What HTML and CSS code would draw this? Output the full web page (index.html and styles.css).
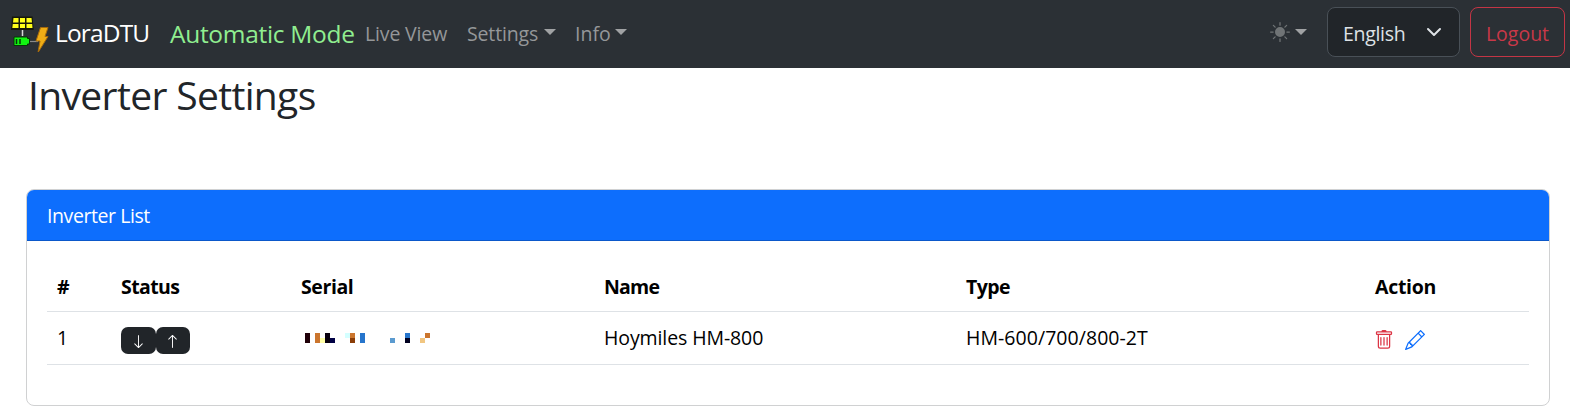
FILE: index.html
```html
<!DOCTYPE html>
<html lang="en">
<head>
<meta charset="utf-8">
<title>LoraDTU</title>
<link rel="stylesheet" href="styles.css">
</head>
<body>
<nav class="navbar">
  <svg class="logo" viewBox="0 0 40 40">
    <path d="M2 4.500h20.500l1.200 13.500H1z" fill="#16180a"/>
    <path d="M3.500 6h5v4.500H3zM10 6h5v4.500h-5zM16.500 6h5l.5 4.500h-5.500zM2.800 12h5.700v4H2.300zM10 12h5v4h-5zM16.500 12h5.700l.3 4h-6z" fill="#ffff1a"/>
    <path d="M12.500 18v6" stroke="#d8d8d8" stroke-width="1.500"/>
    <path d="M20 29.500h8" stroke="#8a8a8a" stroke-width="1.200"/>
    <path d="M4 25h13.500v1.500h2v5.500h-2v1.500H4z" fill="#12f312" stroke="#073507"/>
    <path d="M6.500 27v5M10 27v5" stroke="#063806" stroke-width="1.500"/>
    <path d="M30.500 15.500h7.500l-3 9h3L28 40.500l2-11.500H26z" fill="#efad16" stroke="#a66a0c"/>
  </svg>
  <span class="brand">LoraDTU</span>
  <span class="mode">Automatic Mode</span>
  <a class="link live">Live View</a>
  <a class="link settings">Settings</a><i class="caret"></i>
  <a class="link info">Info</a><i class="caret"></i>
  <div class="tools">
    <svg class="sun" viewBox="0 0 16 16"><path d="M8 12a4 4 0 1 0 0-8 4 4 0 0 0 0 8M8 0a.5.5 0 0 1 .5.5v2a.5.5 0 0 1-1 0v-2A.5.5 0 0 1 8 0m0 13a.5.5 0 0 1 .5.5v2a.5.5 0 0 1-1 0v-2A.5.5 0 0 1 8 13m8-5a.5.5 0 0 1-.5.5h-2a.5.5 0 0 1 0-1h2a.5.5 0 0 1 .5.5M3 8a.5.5 0 0 1-.5.5h-2a.5.5 0 0 1 0-1h2A.5.5 0 0 1 3 8m10.657-5.657a.5.5 0 0 1 0 .707l-1.414 1.415a.5.5 0 1 1-.707-.708l1.414-1.414a.5.5 0 0 1 .707 0m-9.193 9.193a.5.5 0 0 1 0 .707L3.050 13.657a.5.5 0 0 1-.707-.707l1.414-1.414a.5.5 0 0 1 .707 0m9.193 2.121a.5.5 0 0 1-.707 0l-1.414-1.414a.5.5 0 0 1 .707-.707l1.414 1.414a.5.5 0 0 1 0 .707M4.464 4.465a.5.5 0 0 1-.707 0L2.343 3.050a.5.5 0 1 1 .707-.707l1.414 1.414a.5.5 0 0 1 0 .708"/></svg>
    <i class="caret theme-caret"></i>
    <div class="select"><span>English</span><svg class="chevron" viewBox="0 0 16 16"><path d="m2 5 6 6 6-6"/></svg></div>
    <button class="logout">Logout</button>
  </div>
</nav>
<main class="page">
  <h1 class="title"><span>Inverter Settings</span></h1>
  <section class="card">
    <header class="card-header"><span>Inverter List</span></header>
    <div class="table">
      <div class="row head">
        <b class="c-num">#</b><b class="c-status">Status</b><b class="c-serial">Serial</b><b class="c-name">Name</b><b class="c-type">Type</b><b class="c-action">Action</b>
      </div>
      <div class="row">
        <span>1</span>
        <span class="badges">
          <span class="badge"><svg viewBox="0 0 16 16"><path fill-rule="evenodd" d="M8 1a.5.5 0 0 1 .5.5v11.793l3.146-3.147a.5.5 0 0 1 .708.708l-4 4a.5.5 0 0 1-.708 0l-4-4a.5.5 0 0 1 .708-.708L7.500 13.293V1.500A.5.5 0 0 1 8 1"/></svg></span><span class="badge"><svg viewBox="0 0 16 16"><path fill-rule="evenodd" d="M8 15a.5.5 0 0 0 .5-.5V2.707l3.146 3.147a.5.5 0 0 0 .708-.708l-4-4a.5.5 0 0 0-.708 0l-4 4a.5.5 0 1 0 .708.708L7.500 2.707V14.500a.5.5 0 0 0 .5.5"/></svg></span>
        </span>
        <svg class="serial" viewBox="0 0 26 2" shape-rendering="crispEdges">
          <path fill="#200008" d="M0 0h1v2H0z"/><path fill="#cb752d" d="M2 0h1v2H2zM9 0h1v1H9zM24 0h1v1h-1z"/><path fill="#ffffa6" d="M3 1h1v1H3z"/><path fill="#08000e" d="M4 0h1v2H4z"/><path fill="#000044" d="M5 1h1v1H5z"/><path fill="#d4ffff" d="M8 0h1v1H8z"/><path fill="#8b3d08" d="M9 1h1v1H9z"/><path fill="#2675cc" d="M11 0h1v2h-1zM20 0h1v1h-1z"/><path fill="#5b9bd0" d="M17 1h1v1h-1z"/><path fill="#000020" d="M20 1h1v1h-1z"/><path fill="#f1c681" d="M23 1h1v1h-1z"/>
        </svg>
        <span class="v-name">Hoymiles HM-800</span>
        <span class="v-type">HM-600/700/800-2T</span>
        <span class="actions">
          <svg class="trash" viewBox="0 0 16 16"><path d="M5.500 5.500A.5.5 0 0 1 6 6v6a.5.5 0 0 1-1 0V6a.5.5 0 0 1 .5-.5m2.500 0a.5.5 0 0 1 .5.5v6a.5.5 0 0 1-1 0V6a.5.5 0 0 1 .5-.5m3 .5a.5.5 0 0 0-1 0v6a.5.5 0 0 0 1 0z"/><path d="M14.500 3a1 1 0 0 1-1 1H13v9a2 2 0 0 1-2 2H5a2 2 0 0 1-2-2V4h-.5a1 1 0 0 1-1-1V2a1 1 0 0 1 1-1H6a1 1 0 0 1 1-1h2a1 1 0 0 1 1 1h3.500a1 1 0 0 1 1 1zM4.118 4 4 4.059V13a1 1 0 0 0 1 1h6a1 1 0 0 0 1-1V4.059L11.882 4zM2.500 3h11V2h-11z"/></svg>
          <svg class="pencil" viewBox="0 0 16 16"><path d="M12.146.146a.5.5 0 0 1 .708 0l3 3a.5.5 0 0 1 0 .708l-10 10a.5.5 0 0 1-.168.110l-5 2a.5.5 0 0 1-.650-.650l2-5a.5.5 0 0 1 .110-.168zM11.207 2.500 13.500 4.793 14.793 3.500 12.500 1.207zm1.586 3L10.500 3.207 4 9.707V10h.5a.5.5 0 0 1 .5.5v.5h.5a.5.5 0 0 1 .5.5v.5h.293zm-9.761 5.175-.106.106-1.528 3.821 3.821-1.528.106-.106A.5.5 0 0 1 5 12.500V12h-.5a.5.5 0 0 1-.5-.5V11h-.5a.5.5 0 0 1-.468-.325"/></svg>
        </span>
      </div>
    </div>
  </section>
</main>
</body>
</html>
```
FILE: styles.css
```css
* { box-sizing: border-box; }
body {
  margin: 0;
  background: #fff;
  color: #000;
  font: 19.5px/30px "Open Sans", "Noto Sans", sans-serif;
  overflow: hidden;
}
svg { display: block; flex: none; }
.navbar {
  display: flex;
  align-items: center;
  height: 68px;
  padding: 0 5px 4px 10px;
  background: #2b3035;
  white-space: nowrap;
}
.logo { width: 40px; height: 40px; margin-top: -1px; }
.brand { width: 119px; padding: 2px 0 0 5px; color: #fff; font-size: 24.5px; letter-spacing: -.85px; }
.mode { width: 196px; padding: 3px 0 0 1px; color: #90ee90; font-size: 24.5px; letter-spacing: -.3px; }
.link { margin-top: 3px; color: #959799; letter-spacing: -.15px; }
.live { width: 102px; }
.settings { width: 77px; }
.info { width: 40px; margin-left: 19px; letter-spacing: 0; }
.caret {
  border: 6px solid transparent;
  border-top-color: #a0a2a4;
  border-bottom: 0;
}
.tools { display: flex; align-items: center; margin-left: auto; }
.sun { width: 20px; height: 20px; fill: #707476; }
.theme-caret { margin: 0 20px 0 5px; }
.select {
  display: flex;
  align-items: center;
  justify-content: space-between;
  width: 133px;
  height: 50px;
  margin-right: 10px;
  padding: 4px 17px 0 15px;
  border: 1px solid #495057;
  border-radius: 8px;
  background: #212529;
  color: #dee2e6;
  letter-spacing: -.3px;
}
.chevron { width: 16px; height: 16px; margin-top: -5px; fill: none; stroke: #dee2e6; stroke-width: 2; stroke-linecap: round; stroke-linejoin: round; }
.logout {
  width: 95px;
  height: 50px;
  padding: 4px 0 0;
  border: 1px solid #c43545;
  border-radius: 8px;
  background: none;
  color: #c93848;
  font: inherit;
  letter-spacing: 0;
}
.page { padding: 0 20px 0 26px; }
.title {
  height: 121px;
  margin: 0;
  padding: 3px 0 0 2px;
  color: #212529;
  font-size: 39px;
  font-weight: 400;
  line-height: 48px;
  letter-spacing: -.65px;
}
.card { height: 217px; border: 1px solid #d0d1d2; border-radius: 8px; }
.card-header {
  height: 51px;
  padding: 11px 20px;
  border-bottom: 1px solid #0b58ca;
  border-radius: 7px 7px 0 0;
  background: #0d6efd;
  color: #fff;
  letter-spacing: -.42px;
}
.table { padding: 20px 20px 0; }
.row {
  display: grid;
  grid-template-columns: 64px 180px 303px 362px 408px 1fr;
  align-items: center;
  height: 53px;
  padding-left: 10px;
  border-bottom: 1px solid #dee2e6;
  white-space: nowrap;
}
.head { height: 51px; padding-top: 1px; letter-spacing: -.6px; }
.c-serial { letter-spacing: -.4px; }
.c-name { letter-spacing: -.8px; }
.c-action { padding-left: 1px; letter-spacing: -.3px; }
.badges { display: flex; padding-top: 5px; }
.badge { display: flex; justify-content: center; align-items: center; width: 34.5px; height: 27px; padding-top: 2px; border-radius: 7px; background: #212529; }
.badge svg { width: 15px; height: 15px; fill: #fff; }
.serial { width: 130px; height: 10px; margin-left: 4px; }
.v-name { letter-spacing: -.1px; }
.v-type { letter-spacing: .05px; }
.actions { display: flex; gap: 11px; padding-top: 3px; }
.actions svg { width: 20px; height: 20px; }
.trash { fill: #dc3545; }
.pencil { fill: #0d6efd; }
```
